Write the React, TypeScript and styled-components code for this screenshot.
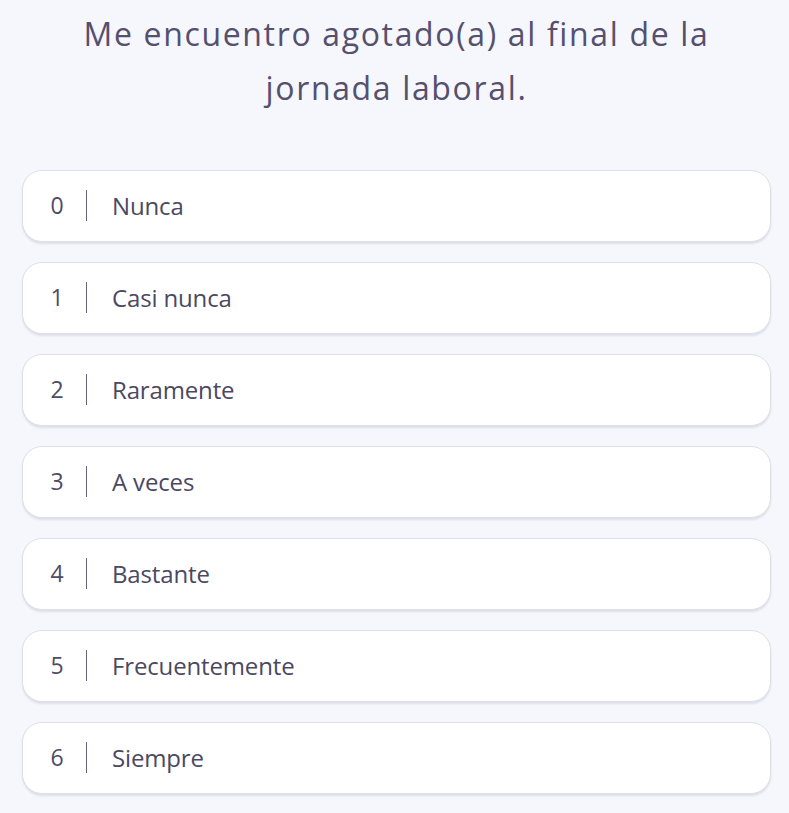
import React from "react";
import styled, {createGlobalStyle} from "styled-components";

const GlobalStyle = createGlobalStyle`
    html, body {
        margin: 0;
        padding: 0;
        background: #f6f7fc;
    }
    body {
        font-family: "Open Sans", "Lato", sans-serif;
    }
`

const Page = styled.div`
    display: flex;
    flex-direction: column;
    padding: 7px 18px 20px 22px;
`

const Question = styled.h1`
    margin: 0 auto 55px;
    max-width: 670px;
    text-align: center;
    font-size: 32px;
    line-height: 54px;
    letter-spacing: 1.65px;
    font-weight: 400;
    color: #55506e;
`

const Options = styled.div`
    display: flex;
    flex-direction: column;
    gap: 20px;
`

const Option = styled.button`
    display: flex;
    align-items: center;
    height: 72px;
    padding: 0 0 2px 26px;
    background: #ffffff;
    border: 1px solid #dfdfe8;
    border-radius: 20px;
    box-shadow: 0 2px 2px rgba(60, 60, 100, 0.12);
    font-family: inherit;
    text-align: left;
    cursor: pointer;

    .value {
        width: 16px;
        text-align: center;
        font-size: 23px;
        color: #4f4b66;
    }

    .sep {
        width: 1px;
        height: 31px;
        margin: 0 25px 0 21px;
        background: #66627c;
    }

    .label {
        font-size: 24px;
        letter-spacing: -0.15px;
        color: #4b4862;
    }
`

const answers = [
    "Nunca",
    "Casi nunca",
    "Raramente",
    "A veces",
    "Bastante",
    "Frecuentemente",
    "Siempre"
];

export default function App() {
    return (
        <>
            <GlobalStyle/>
            <Page>
                <Question>Me encuentro agotado(a) al final de la jornada laboral.</Question>
                <Options>
                    {answers.map((label, i) => (
                        <Option key={label}>
                            <span className="value">{i}</span>
                            <span className="sep"/>
                            <span className="label">{label}</span>
                        </Option>
                    ))}
                </Options>
            </Page>
        </>
    );
}
